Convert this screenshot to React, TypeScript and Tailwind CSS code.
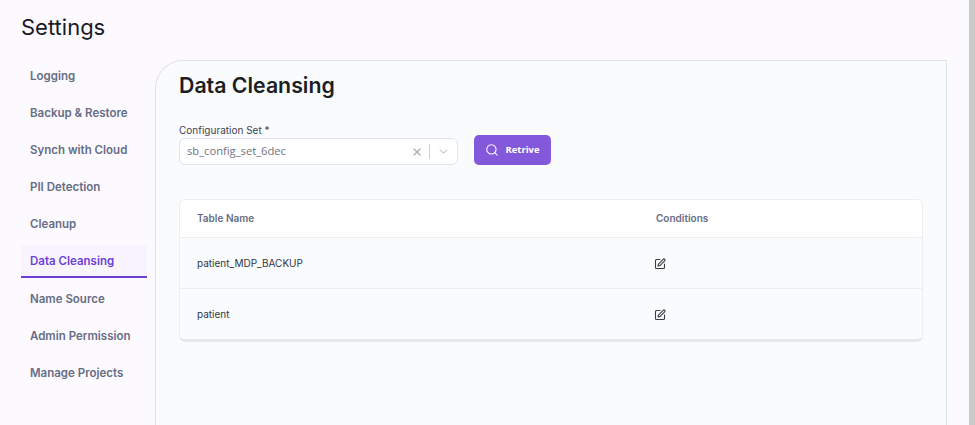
import React from "react";
import { Search, X, ChevronDown, SquarePen } from "lucide-react";

const items = [
  "Logging",
  "Backup & Restore",
  "Synch with Cloud",
  "PII Detection",
  "Cleanup",
  "Data Cleansing",
  "Name Source",
  "Admin Permission",
  "Manage Projects",
];

const rows = ["patient_MDP_BACKUP", "patient"];

function navClass(item: string) {
  if (item === "Data Cleansing") {
    return "mb-[5px] flex h-[33px] items-center border-b-2 border-[#6d3fd6] bg-[#f8f5ff] pl-[9px] pt-[2px] text-[11.5px] font-semibold text-[#6d3fd6]";
  }
  return "mb-[4px] flex h-[33px] items-center pl-[9px] text-[11.5px] font-semibold text-[#666d85]";
}

export default function App() {
  return (
    <div className="flex h-[425px] w-[975px] overflow-hidden bg-[#fcfaff] text-[#1a1c23]" style={{ fontFamily: "Inter, sans-serif" }}>
      <div className="flex min-w-0 flex-1 flex-col">
        <h1 className="ml-[21px] mt-[13px] h-[47px] text-[22px] leading-[28px] font-normal text-[#181b25]">Settings</h1>
        <div className="flex min-h-0 flex-1">
          <nav className="ml-[21px] mr-[8px] flex w-[126px] shrink-0 flex-col">
            {items.map((item) => (
              <div key={item} className={navClass(item)}>
                {item}
              </div>
            ))}
          </nav>
          <main className="w-[792px] shrink-0 rounded-tl-[28px] border-l border-t border-r border-[#dfe3ea] bg-[#fafbfd] pl-[23px] pr-[23px]">
            <h2 className="mt-[9px] text-[21.3px] leading-[30px] font-semibold text-[#1c1e24]">Data Cleansing</h2>
            <div className="mt-[23px] flex items-start">
              <div className="w-[279px]">
                <label className="block h-[15px] text-[10px] leading-[14px] text-[#3f4450]">Configuration Set *</label>
                <div className="flex h-[27px] items-center rounded-[6px] border border-[#dfe3ea] bg-white pl-[7px] pr-[7px]">
                  <span className="flex-1 text-[11.2px] text-[#6f7480]" style={{ fontFamily: '"Open Sans", sans-serif' }}>sb_config_set_6dec</span>
                  <X className="h-[12px] w-[12px] text-[#a9acb4]" strokeWidth={2.4} />
                  <span className="ml-[6px] mr-[7px] h-[15px] w-px bg-[#cfd1d6]" />
                  <ChevronDown className="h-[13px] w-[13px] text-[#a9acb4]" strokeWidth={1.8} />
                </div>
              </div>
              <button className="ml-[16px] mt-[12px] flex h-[30px] w-[77px] items-center justify-center gap-[6px] rounded-[5px] bg-[#8458db] text-[9.5px] font-bold text-white" style={{ fontFamily: '"Open Sans", sans-serif' }}>
                <Search className="h-[14px] w-[14px]" strokeWidth={1.8} />
                Retrive
              </button>
            </div>
            <div className="mt-[34px] w-[744px] overflow-hidden rounded-[6px] border border-[#eceef2] border-b-[3px] border-b-[#e6e8ec] bg-[#fafbfd]">
              <div className="flex h-[38px] items-center border-b border-[#eceef2] bg-white text-[10px] font-semibold text-[#666d85]">
                <span className="w-[476px] pl-[17px]">Table Name</span>
                <span>Conditions</span>
              </div>
              {rows.map((row, i) => (
                <div key={row} className={i === 0 ? "flex h-[51px] items-center border-b border-[#eceef2]" : "flex h-[50px] items-center"}>
                  <span className="w-[474px] pl-[17px] text-[10px] text-[#33363f]">{row}</span>
                  <SquarePen className="mt-[2px] h-[12px] w-[12px] text-[#3a3d48]" strokeWidth={2.2} />
                </div>
              ))}
            </div>
          </main>
        </div>
      </div>
      <div className="w-[6px] shrink-0 bg-[#c9c9c9]" />
    </div>
  );
}
